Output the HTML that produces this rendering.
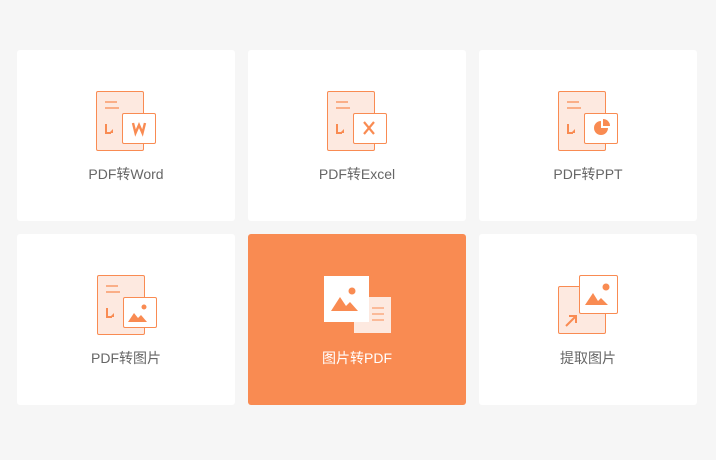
<!DOCTYPE html><html><head><meta charset="utf-8"><style>
body{margin:0;width:716px;height:460px;background:#f6f6f6;position:relative;font-family:"Liberation Sans","Noto Sans CJK SC",sans-serif;overflow:hidden}
.c{position:absolute;width:218px;height:171px;background:#fff;border-radius:3px}
.t{position:absolute;width:218px;text-align:center;font-size:14px;color:#666;}
svg{position:absolute;left:0;top:0}
</style></head><body>
<div class="c" style="left:17px;top:50px"></div>
<div class="c" style="left:248px;top:50px"></div>
<div class="c" style="left:479px;top:50px"></div>
<div class="c" style="left:17px;top:234px"></div>
<div class="c" style="left:248px;top:234px;background:#f98b52"></div>
<div class="c" style="left:479px;top:234px"></div>
<div class="t" style="left:17px;top:164px">PDF转Word</div>
<div class="t" style="left:248px;top:164px">PDF转Excel</div>
<div class="t" style="left:479px;top:164px">PDF转PPT</div>
<div class="t" style="left:17px;top:348px">PDF转图片</div>
<div class="t" style="left:248px;top:348px;color:#fff">图片转PDF</div>
<div class="t" style="left:479px;top:348px">提取图片</div>
<svg width="716" height="460" viewBox="0 0 716 460">
<defs>
<g id="doc">
<rect x="0.5" y="0.5" width="47" height="59" rx="1.5" fill="#fde9e0" stroke="#f98b52"/>
<path d="M9 11h12M9 17h14" stroke="#f98b52" stroke-width="1.2"/>
<path d="M10 33v9h5" stroke="#f98b52" stroke-width="2" fill="none"/>
<path d="M13 42l4-4v4z" fill="#f98b52"/>
<rect x="26.5" y="22.5" width="33" height="30" rx="1.5" fill="#fff" stroke="#f98b52"/>
</g>
</defs>
<use href="#doc" x="96" y="91"/>
<path d="M133 123l2.5 10l3.5-8l3.5 8l2.5-10" stroke="#f98b52" stroke-width="2.4" fill="none"/>
<use href="#doc" x="327" y="91"/>
<path d="M364 122l10 12M374 122l-10 12" stroke="#f98b52" stroke-width="2.2"/>
<use href="#doc" x="558" y="91"/>
<path d="M601 121a7 7 0 1 0 7 7h-7z" fill="#f98b52"/><path d="M603 119a7 7 0 0 1 7 7h-7z" fill="#f98b52"/>
<use href="#doc" x="97" y="275"/>
<path d="M128 322l6-9l4 5l3-3l6 7z" fill="#f98b52"/><circle cx="144" cy="307" r="2.5" fill="#f98b52"/>
<rect x="354" y="297" width="37" height="36" fill="#fde9e0"/>
<path d="M372 308h12M372 314h12M372 320h12" stroke="#f98b52" stroke-width="1"/>
<rect x="324" y="276" width="45" height="46" fill="#fff"/>
<path d="M331 311l9-14l6 9l4-4l8 9z" fill="#f98b52"/><circle cx="352" cy="291" r="3.5" fill="#f98b52"/>
<rect x="558.5" y="286.5" width="47" height="47" rx="1.5" fill="#fde9e0" stroke="#f98b52"/>
<path d="M566 326l10-10M569 316h7v7" stroke="#f98b52" stroke-width="2" fill="none"/>
<rect x="579.5" y="275.5" width="38" height="38" rx="1.5" fill="#fff" stroke="#f98b52"/>
<path d="M585 305l8-12l5 8l3-3l7 7z" fill="#f98b52"/><circle cx="606" cy="287" r="3.5" fill="#f98b52"/>
</svg>
</body></html>
